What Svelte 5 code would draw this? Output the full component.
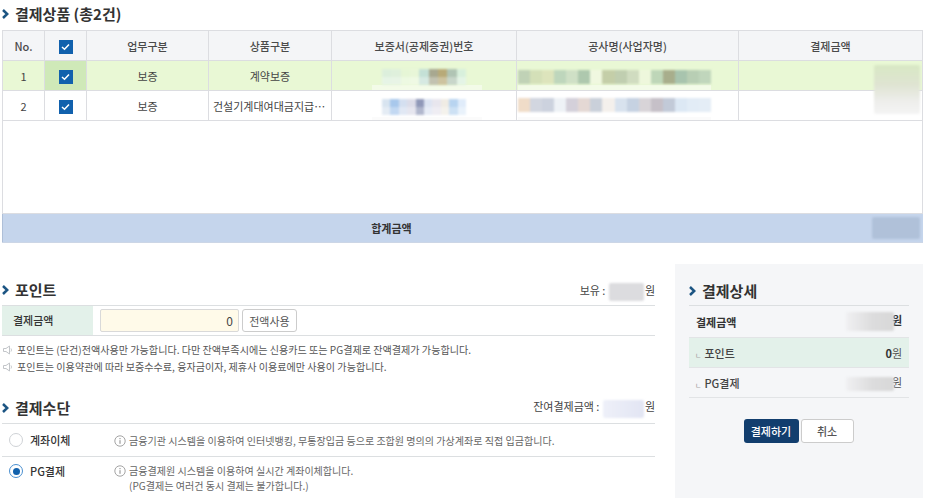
<script>
  // blurred-out values in the screenshot, kept as colour mosaics
  const rows = [
    { no: 1, kind: '보증', product: '계약보증', on: true },
    { no: 2, kind: '보증', product: '건설기계대여대금지급보증', on: false }
  ];
  const certA = ['#dcefdc','#dff0dc','#e6f6d6','#e8f6d8','#c4e0d6','#a8a890','#b8aa78','#b0c4b4','#d8f0dc'];
  const certB = ['#d8e4f0','#a8c8ec','#d4dff0','#dcdce8','#9098b8','#dde4f2','#e8e6ee','#f0ece4','#b8d4f0','#e0ecfa'];
  const nameA = ['#c0d2b6','#d4e0b8','#dde4bc','#bed6bc','#cfe0c6','#aec8ae','#f0f8e0','#c4cea8','#c0ceb0','#d0dcc0','#eef7dc','#bed6b8','#a8ae8c','#a8c4ae','#b8ceb4','#c0d6bc'];
  const nameB = ['#f0dcc8','#d2d6e0','#ccd2de','#eef2f6','#d4d0da','#e4d8d4','#cad0da','#f4f0ec','#d8e2ee','#c6d2e2','#d8d4d8','#c6c0c8','#c2cad8','#dce8f4','#e2ecf6','#e4edf6'];
</script>

{#snippet mosaic(colors, kind)}
  <span class="mosaic {kind}">
    {#each colors as c}<i style="background:{c}"></i>{/each}
  </span>
{/snippet}

{#snippet arrow()}
  <svg class="arrow" width="7" height="10" viewBox="0 0 7 10"><path d="M1 1 5.200 5 1 9" fill="none" stroke="#1c5583" stroke-width="2.500"/></svg>
{/snippet}

{#snippet speaker()}
  <svg class="speaker" width="10" height="10" viewBox="0 0 10 10"><path d="M.5 3.500h2.500L6.500 1v8L3 6.500H.5zM8 3.500c.6 1 .6 2 0 3" fill="none" stroke="#c2c5c9"/></svg>
{/snippet}

{#snippet info()}
  <svg class="info" width="12" height="12" viewBox="0 0 12 12"><circle cx="6" cy="6" r="5.200" fill="none" stroke="#9a9a9a" stroke-width=".9"/><path d="M6 5.200v3.600M6 3v1.200" stroke="#888" stroke-width="1"/></svg>
{/snippet}

{#snippet check()}
  <span class="check"><svg width="9" height="8" viewBox="0 0 9 8"><path d="M1 4 3.500 6.300 8 1.400" fill="none" stroke="#fff" stroke-width="1.500"/></svg></span>
{/snippet}

<div class="page">
  <h2 class="title top">{@render arrow()}결제상품 (총2건)</h2>

  <div class="table-wrap">
    <table>
      <colgroup>
        <col style="width:42px" /><col style="width:42px" /><col style="width:122px" /><col style="width:123px" />
        <col style="width:185px" /><col style="width:222px" /><col style="width:184px" />
      </colgroup>
      <thead>
        <tr>
          <th>No.</th>
          <th>{@render check()}</th>
          <th>업무구분</th>
          <th>상품구분</th>
          <th>보증서(공제증권)번호</th>
          <th>공사명(사업자명)</th>
          <th>결제금액</th>
        </tr>
      </thead>
      <tbody>
        {#each rows as r}
          <tr class:on={r.on}>
            <td>{r.no}</td>
            <td class="chk">{@render check()}</td>
            <td>{r.kind}</td>
            <td><div class="clip">{r.product}</div></td>
            <td class="blurred"><span class="band cert"></span>{@render mosaic(r.on ? certA : certB, 'cert')}</td>
            <td class="blurred left"><span class="band name"></span>{@render mosaic(r.on ? nameA : nameB, 'name')}</td>
            <td></td>
          </tr>
        {/each}
        <tr class="spacer"><td colspan="7"></td></tr>
      </tbody>
      <tfoot>
        <tr>
          <td></td>
          <td colspan="5">합계금액</td>
          <td><span class="smudge total"></span></td>
        </tr>
      </tfoot>
    </table>
    <span class="smudge amount"></span>
  </div>

  <div class="lower">
    <div class="main">
      <div class="head">
        <h2 class="title">{@render arrow()}포인트</h2>
        <span class="sum">보유 : <span class="smudge grey"></span>원</span>
      </div>
      <div class="point-row">
        <div class="label">결제금액</div>
        <div class="field">
          <input value="0" />
          <button class="small">전액사용</button>
        </div>
      </div>
      <p class="note first">{@render speaker()}포인트는 (단건)전액사용만 가능합니다. 다만 잔액부족시에는 신용카드 또는 PG결제로 잔액결제가 가능합니다.</p>
      <p class="note">{@render speaker()}포인트는 이용약관에 따라 보증수수료, 융자금이자, 제휴사 이용료에만 사용이 가능합니다.</p>

      <div class="head pay">
        <h2 class="title">{@render arrow()}결제수단</h2>
        <span class="sum">잔여결제금액 : <span class="smudge blue"></span>원</span>
      </div>
      <div class="method one">
        <span class="radio"></span>
        <strong>계좌이체</strong>
        <p>{@render info()}금융기관 시스템을 이용하여 인터넷뱅킹, 무통장입금 등으로 조합원 명의의 가상계좌로 직접 입금합니다.</p>
      </div>
      <div class="method two">
        <span class="radio sel"></span>
        <strong>PG결제</strong>
        <p>{@render info()}금융결제원 시스템을 이용하여 실시간 계좌이체합니다.<br /><span class="indent">(PG결제는 여러건 동시 결제는 불가합니다.)</span></p>
      </div>
    </div>

    <aside>
      <h2 class="title">{@render arrow()}결제상세</h2>
      <dl>
        <div class="line strong"><dt>결제금액</dt><dd><span class="smudge side tall"></span>원</dd></div>
        <div class="line mint"><dt><em>ㄴ</em>포인트</dt><dd><b>0</b>원</dd></div>
        <div class="line"><dt><em>ㄴ</em>PG결제</dt><dd><span class="smudge side"></span>원</dd></div>
      </dl>
      <div class="actions">
        <button class="primary">결제하기</button>
        <button class="cancel">취소</button>
      </div>
    </aside>
  </div>
</div>

<style>
  :global(body) {
    margin: 0;
    background: #fff;
  }
  .page {
    width: 936px;
    height: 498px;
    overflow: hidden;
    box-sizing: border-box;
    padding: 0 13px 0 2px;
    font-family: "Noto Sans CJK KR", "Noto Sans", sans-serif;
    font-size: 11px;
    color: #444;
  }
  .title {
    margin: 0;
    display: flex;
    align-items: center;
    gap: 6px;
    font-size: 15px;
    line-height: 22px;
    font-weight: 700;
    color: #333;
  }
  .title.top {
    height: 30px;
    box-sizing: border-box;
    padding: 3px 0 5px;
  }
  .arrow { flex: none; }

  .table-wrap { position: relative; }
  table {
    table-layout: fixed;
    width: 920px;
    border-collapse: collapse;
    text-align: center;
  }
  th, td {
    border: 1px solid #dcdde1;
    padding: 0;
    height: 29px;
    font-weight: 400;
  }
  th {
    background: #f4f5f7;
    font-weight: 500;
    color: #4a4a4a;
  }
  tr.on td { background: #e9f8d5; }
  tr.on td.chk { background: #cfe9b8; }
  .clip {
    padding: 0 4px;
    overflow: hidden;
    white-space: nowrap;
    text-overflow: ellipsis;
  }
  .check {
    display: inline-flex;
    align-items: center;
    justify-content: center;
    width: 14px;
    height: 14px;
    background: #1161ad;
    vertical-align: middle;
  }
  .blurred { position: relative; overflow: hidden; }
  .blurred.left { text-align: left; padding-left: 1px; }
  .mosaic {
    position: relative;
    display: inline-flex;
    vertical-align: middle;
    filter: blur(1.2px);
  }
  .mosaic i { flex: 1; }
  .mosaic.cert { width: 84px; height: 16px; }
  .mosaic.name { width: 193px; height: 14px; }
  tr:not(.on) .mosaic.name { top: -2px; }
  .mosaic.cert::after {
    content: "";
    position: absolute;
    inset: 50% 0 0;
    background: rgba(255, 255, 255, 0.3);
  }
  .band {
    position: absolute;
    bottom: 0;
    height: 5px;
    background: rgba(255, 255, 255, 0.45);
  }
  tr:not(.on) .band { height: 3px; background: #fbfbfb; }
  .band.cert { left: 40px; width: 110px; }
  .band.name { left: 1px; width: 193px; }
  .spacer td {
    height: 92px;
    border-left: 1px solid #dcdde1;
    border-right: 1px solid #dcdde1;
  }
  tfoot td {
    background: #c5d5ec;
    border: 1px solid #c5d5ec;
    border-left-color: #aebfd8;
    border-top-color: #c9cfdc;
    border-bottom-color: #ccd6e6;
    font-weight: 700;
    color: #333;
    height: 28px;
    text-align: center;
  }
  tfoot td:last-child { text-align: right; padding-right: 2px; }

  .smudge {
    display: inline-block;
    vertical-align: middle;
    border-radius: 2px;
    filter: blur(1px);
  }
  .smudge.amount {
    position: absolute;
    left: 872px;
    top: 35px;
    width: 46px;
    height: 49px;
    background: linear-gradient(#d8e8c4, #dfe4d2 40%, #eeeeec 75%, #f4f4f4);
  }
  .smudge.total { width: 48px; height: 22px; background: #b0c1d9; }
  .smudge.grey { width: 35px; height: 18px; background: #dcdcdf; margin: 0 1px; }
  .smudge.blue { width: 41px; height: 18px; background: linear-gradient(90deg, #eef0f9, #e2e5f3); margin: 0 1px; }
  .smudge.side {
    width: 48px;
    height: 14px;
    margin-right: -2px;
    background: linear-gradient(90deg, #f0f0f2, #dcdcdd 55%, #d8d8d8);
  }
  .smudge.side.tall { height: 19px; }

  .lower {
    display: flex;
    margin-top: 21px;
    gap: 20px;
    align-items: stretch;
  }
  .main {
    width: 653px;
    flex: none;
    padding-top: 15px;
  }
  .head {
    display: flex;
    justify-content: space-between;
    align-items: center;
    box-sizing: border-box;
    height: 27px;
    padding-bottom: 4px;
    border-bottom: 1px solid #dcdfe1;
  }
  .head .sum { margin-top: 3px; }
  .head.pay { margin-top: 19px; height: 30px; padding-bottom: 1px; }
  .head.pay .sum { margin-top: 0; }
  .sum { color: #444; }
  .point-row {
    display: flex;
    height: 29px;
    border-bottom: 1px solid #dcdfe1;
  }
  .label {
    width: 91px;
    box-sizing: border-box;
    padding-left: 11px;
    background: #e3f1ea;
    font-weight: 500;
    color: #333;
    line-height: 29px;
  }
  .field {
    display: flex;
    align-items: center;
    gap: 3px;
    padding-left: 7px;
  }
  input {
    width: 139px;
    height: 23px;
    box-sizing: border-box;
    border: 1px solid #d9d9d9;
    border-radius: 2px;
    background: #fffae9;
    text-align: right;
    padding: 0 5px;
    font: inherit;
    font-size: 12px;
    color: #444;
  }
  .small {
    width: 55px;
    height: 23px;
    padding: 0;
    border: 1px solid #ccc;
    border-radius: 3px;
    background: #fff;
    font: inherit;
    color: #555;
  }
  .note {
    margin: 0;
    font-size: 10.08px;
    line-height: 17px;
    color: #555;
    white-space: nowrap;
    display: flex;
    align-items: center;
    gap: 4px;
  }
  .note.first { margin-top: 5px; }
  .speaker { flex: none; margin-left: 1px; }

  .method {
    display: grid;
    grid-template-columns: 16px 76px 1fr;
    column-gap: 5px;
    padding-left: 7px;
    box-sizing: border-box;
  }
  .method.one {
    height: 33px;
    align-items: center;
    border-bottom: 1px solid #dcdfe1;
  }
  .method.two { padding-top: 6px; align-items: start; }
  .method strong { font-weight: 500; color: #333; }
  .method.two strong { line-height: 17px; }
  .method p {
    margin: 0;
    font-size: 10.05px;
    line-height: 15px;
    color: #666;
    white-space: nowrap;
    margin-left: 3px;
  }
  .info { vertical-align: -2px; margin-right: 3px; }
  .indent { padding-left: 15px; }
  .radio {
    width: 14px;
    height: 14px;
    border: 1px solid #cfd2d6;
    border-radius: 50%;
    background: #fff;
    display: block;
    box-sizing: border-box;
  }
  .radio.sel {
    border: 1px solid #4a8fd0;
    position: relative;
    margin-top: 1px;
  }
  .radio.sel::after {
    content: "";
    position: absolute;
    inset: 2.500px;
    border-radius: 50%;
    background: #1161ad;
  }

  aside {
    width: 248px;
    flex: none;
    height: 234px;
    box-sizing: border-box;
    background: #f5f6f8;
    padding: 14px 14px 0;
  }
  aside .title { box-sizing: border-box; height: 28px; padding-bottom: 2px; border-bottom: 1px solid #dcdfe1; }
  dl { margin: 0; }
  .line {
    display: flex;
    justify-content: space-between;
    align-items: center;
    box-sizing: border-box;
    height: 30px;
    padding: 0 7px;
    border-bottom: 1px solid #e2e4e6;
    color: #555;
  }
  .line.strong { font-weight: 700; color: #333; height: 32px; }
  .line.mint { background: #e3f1ea; }
  dt { font-weight: 500; color: #444; }
  .strong dt { font-weight: 700; color: #333; }
  dt em { font-style: normal; font-size: 7px; color: #aaa; margin: 0 3px 0 -1px; }
  dd { margin: 0; }
  dd b { font-weight: 700; color: #333; }
  .actions {
    display: flex;
    justify-content: center;
    gap: 2px;
    margin-top: 21px;
    padding-right: 1px;
  }
  .actions button {
    height: 24px;
    padding: 0;
    border-radius: 3px;
    font: inherit;
    font-weight: 500;
  }
  .primary {
    width: 55px;
    border: 0;
    background: #123e6e;
    color: #fff;
  }
  .cancel {
    width: 53px;
    border: 1px solid #ccc;
    background: #fff;
    color: #555;
  }
</style>
